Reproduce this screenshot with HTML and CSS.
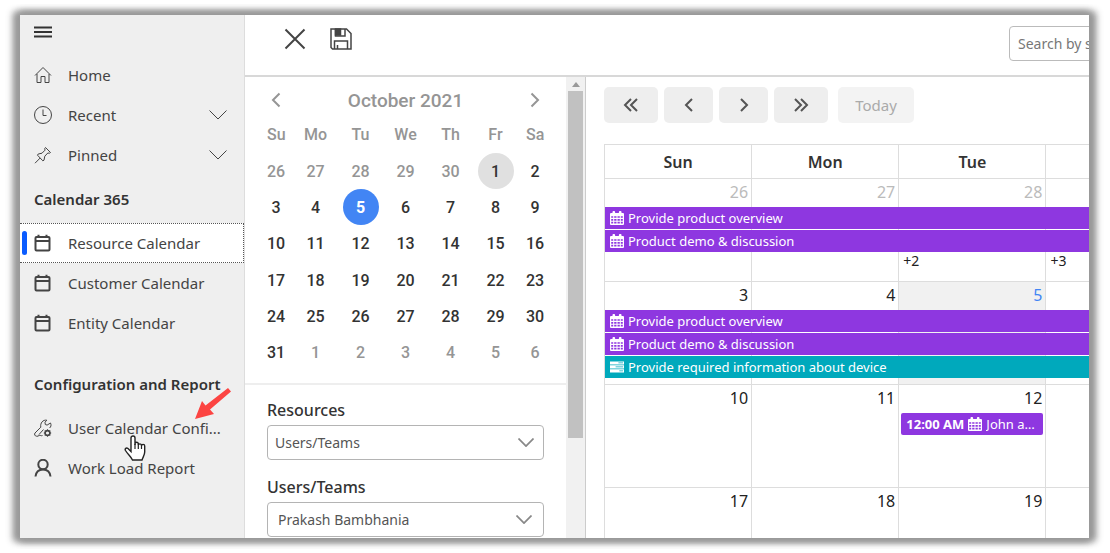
FILE: index.html
```html
<!DOCTYPE html>
<html lang="en">

<head>
	<meta charset="UTF-8">
	<meta name="viewport" content="width=device-width, initial-scale=1.0">
	<title>Resource Calendar</title>
	<link rel="stylesheet" href="styles.css">
</head>

<body>
	<svg class="defs" width="0" height="0" aria-hidden="true">
		<symbol id="i-calendar" viewBox="0 0 18 18">
			<rect x="1.5" y="3" width="14" height="13.5" rx="1" />
			<path d="M1.5 7h14M4.5 .8v2.4M12.5 .8v2.4" />
		</symbol>
		<symbol id="i-down" viewBox="0 0 18 10">
			<path d="M.5 .5 9 9 17.5 .5" />
		</symbol>
		<symbol id="i-event" viewBox="0 0 14 14">
			<path fill="currentColor" fill-rule="evenodd"
				d="M1 2h1.500V1a1 1 0 0 1 1-1h.6a1 1 0 0 1 1 1v1h3.800V1a1 1 0 0 1 1-1h.6a1 1 0 0 1 1 1v1H13a1 1 0 0 1 1 1v10a1 1 0 0 1-1 1H1a1 1 0 0 1-1-1V3a1 1 0 0 1 1-1zM1.200 5.200v1.600h2V5.200zM4.200 5.200v1.600h2.300V5.200zM7.500 5.200v1.600h2.300V5.200zM10.800 5.200v1.600h2V5.200zM1.200 7.900v1.800h2V7.900zM4.200 7.900v1.800h2.300V7.900zM7.500 7.900v1.800h2.300V7.900zM10.800 7.900v1.800h2V7.900zM1.200 10.800v1.800h2v-1.800zM4.200 10.800v1.800h2.300v-1.800zM7.500 10.800v1.800h2.300v-1.800zM10.800 10.800v1.800h2v-1.800z" />
		</symbol>
		<symbol id="i-task" viewBox="0 0 15 12">
			<path fill="currentColor" fill-rule="evenodd"
				d="M0 0h15v3.400H0zM9 1.300v.8h5v-.8zM0 4.200h15v3.400H0zM6 5.500v.8h8v-.8zM0 8.400h15v3.400H0zM10 9.700v.8h4v-.8z" />
		</symbol>
	</svg>

	<div class="app">
		<aside class="sidebar">
			<button class="hamburger" aria-label="Menu">
				<svg width="20" height="12" viewBox="0 0 20 12">
					<path d="M1 1.500h18M1 6h18M1 10.500h18" />
				</svg>
			</button>
			<nav>
				<a class="nav-item" href="#">
					<svg class="icon" viewBox="0 0 18 18">
						<path d="M1 9.500 9 1.500l8 8M3 8v8.500h4V10.500h4v6h4V8" />
					</svg>
					Home
				</a>
				<a class="nav-item" href="#">
					<svg class="icon" viewBox="0 0 18 18">
						<circle cx="9" cy="9" r="8.500" />
						<path d="M9 3.500V9.500h3.500" />
					</svg>
					Recent
					<svg class="chevron"><use href="#i-down" /></svg>
				</a>
				<a class="nav-item" href="#">
					<svg class="icon" viewBox="0 0 18 18">
						<path d="M11.500 1.500 16.500 6.500 15.500 7.200 13.800 7 10.800 10.200 10 14.200 8.800 14.800 3.500 9.200 4.200 8 8 7.200 11 4.200 10.800 2.300zM6.200 12 1 17.200" />
					</svg>
					Pinned
					<svg class="chevron"><use href="#i-down" /></svg>
				</a>

				<h2 class="nav-title">Calendar 365</h2>
				<a class="nav-item active" href="#">
					<svg class="icon dark"><use href="#i-calendar" /></svg>
					Resource Calendar
				</a>
				<a class="nav-item" href="#">
					<svg class="icon dark"><use href="#i-calendar" /></svg>
					Customer Calendar
				</a>
				<a class="nav-item" href="#">
					<svg class="icon dark"><use href="#i-calendar" /></svg>
					Entity Calendar
				</a>

				<h2 class="nav-title second">Configuration and Report</h2>
				<a class="nav-item" href="#">
					<svg class="icon" viewBox="0 0 18 18">
						<path d="M8.500 16.500C7 17.500 5.500 15 4 17.200H2.500a2 2 0 0 1-1.500-3.200L6.800 8.200C6 4 9 .5 12.800 1.200L11 3.200l.3 2.300 1.800.6L16.500 4C17.500 6 17 8 15.500 9M5 15.500 9.500 10.500" />
						<circle cx="13.500" cy="14" r="2.400" stroke-width="1.600" />
						<path d="M13.500 10.300v1.500M13.500 16.200v1.500M9.800 14h1.500M15.700 14h1.500M11 11.500l1 1M15 15.500l1 1M11 16.500l1-1M15 12.500l1-1" />
					</svg>
					User Calendar Confi...
					<svg class="arrow" width="38" height="34" viewBox="0 0 38 34">
						<path fill="#fc4442" d="M34 1 37 4.500 16 22.500 20 27 1 32 8 14 11.500 18.500z" />
					</svg>
					<svg class="pointer" width="22" height="26" viewBox="0 0 22 26">
						<path fill="#fff" stroke="#222" stroke-width="1.400" d="M7 16.500V3a2 2 0 0 1 4 0v7V8.500a1.700 1.700 0 0 1 3.300 0V10a1.700 1.700 0 0 1 3.200 0v1a1.600 1.600 0 0 1 3.200 0v6c0 3-1.700 5-2.700 8H8.500C7 21.500 4 19.500 1.500 15.500c-1-1.800.8-3.200 2.500-2z" />
						<path fill="none" stroke="#222" stroke-width="1.200" d="M11 9v5M14.300 9.500V14M17.500 10.500V14" />
					</svg>
				</a>
				<a class="nav-item" href="#">
					<svg class="icon dark" viewBox="0 0 18 18">
						<circle cx="9" cy="5.500" r="4.700" />
						<path d="M1.500 17.500C2 13 5 10.500 9 10.500s7 2.500 7.500 7" />
					</svg>
					Work Load Report
				</a>
			</nav>
		</aside>

		<div class="main-content">
			<header class="top-header">
				<button class="tool" aria-label="Close">
					<svg width="22" height="22" viewBox="0 0 22 22">
						<path d="M1.500 1.500l19 19M20.500 1.500l-19 19" />
					</svg>
				</button>
				<button class="tool save" aria-label="Save">
					<svg width="22" height="22" viewBox="0 0 22 22">
						<path d="M1 1h15.500L21 5.500V21H2.500L1 19.500z" />
						<path d="M4.500 21V13h13v8M5.500 1v7h9.500V1" />
						<path class="solid" d="M5.500 1h5v6h-5z" />
						<path d="M7.500 21v-4" />
					</svg>
				</button>
				<input class="search" type="text" placeholder="Search by subject" aria-label="Search by subject">
			</header>

			<div class="content">
				<section class="filters">
					<div class="filters-body">
						<div class="mini">
							<div class="mini-header">
								<button aria-label="Previous month">
									<svg width="10" height="16" viewBox="0 0 10 16"><path d="M8.500 1.500 2 8l6.500 6.500" /></svg>
								</button>
								<span>October 2021</span>
								<button aria-label="Next month">
									<svg width="10" height="16" viewBox="0 0 10 16"><path d="M1.500 1.500 8 8l-6.500 6.500" /></svg>
								</button>
							</div>
							<table class="mini-table">
								<thead>
									<tr>
										<th>Su</th>
										<th>Mo</th>
										<th>Tu</th>
										<th>We</th>
										<th>Th</th>
										<th>Fr</th>
										<th>Sa</th>
									</tr>
								</thead>
								<tbody id="miniDays"></tbody>
							</table>
						</div>
						<form class="fields">
							<label for="resources">Resources</label>
							<div class="select">
								<select id="resources">
									<option>Users/Teams</option>
								</select>
								<svg><use href="#i-down" /></svg>
							</div>
							<label for="users">Users/Teams</label>
							<div class="select inset">
								<select id="users">
									<option>Prakash Bambhania</option>
								</select>
								<svg><use href="#i-down" /></svg>
							</div>
						</form>
					</div>
					<div class="scrollbar">
						<div class="scroll-up"></div>
						<div class="scroll-thumb"></div>
					</div>
				</section>

				<section class="schedule">
					<div class="schedule-nav">
						<button class="wide" aria-label="Previous year">
							<svg width="16" height="16" viewBox="0 0 16 16"><path d="M8 2 2 8l6 6M14 2 8 8l6 6" /></svg>
						</button>
						<button aria-label="Previous">
							<svg width="16" height="16" viewBox="0 0 16 16"><path d="M11 2 5 8l6 6" /></svg>
						</button>
						<button aria-label="Next">
							<svg width="16" height="16" viewBox="0 0 16 16"><path d="M5 2l6 6-6 6" /></svg>
						</button>
						<button class="wide" aria-label="Next year">
							<svg width="16" height="16" viewBox="0 0 16 16"><path d="M2 2l6 6-6 6M8 2l6 6-6 6" /></svg>
						</button>
						<button class="today" disabled>Today</button>
					</div>
					<table class="month">
						<thead>
							<tr>
								<th>Sun</th>
								<th>Mon</th>
								<th>Tue</th>
								<th>Wed</th>
								<th>Thu</th>
								<th>Fri</th>
								<th>Sat</th>
							</tr>
						</thead>
						<tbody id="monthRows"></tbody>
					</table>
				</section>
			</div>
		</div>
	</div>

	<script>
		const purple = { icon: 'i-event', type: 'meeting' };
		const overview = { ...purple, title: 'Provide product overview', span: true };
		const demo = { ...purple, title: 'Product demo &amp; discussion', span: true };

		const events = {
			'0-0': [overview, demo],
			'1-0': [overview, demo, { icon: 'i-task', type: 'task', title: 'Provide required information about device', span: true }],
			'2-2': [{ ...purple, time: '12:00 AM', title: 'John and team' }]
		};
		const more = { '0-2': '+2', '0-3': '+3' };

		// first cell is Sunday 26 September
		function dayAt(index) {
			return new Date(2021, 8, 26 + index);
		}

		function renderMini() {
			let html = '';
			for (let week = 0; week < 6; week++) {
				html += '<tr>';
				for (let d = 0; d < 7; d++) {
					const date = dayAt(week * 7 + d);
					let cls = date.getMonth() === 9 ? '' : 'other';
					if (date.getMonth() === 9 && date.getDate() === 1) cls = 'first';
					if (date.getMonth() === 9 && date.getDate() === 5) cls = 'selected';
					html += `<td><button class="${cls}">${date.getDate()}</button></td>`;
				}
				html += '</tr>';
			}
			document.getElementById('miniDays').innerHTML = html;
		}

		function eventHtml(e) {
			const time = e.time ? `<strong>${e.time}</strong>` : '';
			return `<a href="#" class="event ${e.type} ${e.span ? 'span' : ''}">${time}<svg><use href="#${e.icon}" /></svg><span>${e.title}</span></a>`;
		}

		function renderMonth() {
			let html = '';
			for (let week = 0; week < 5; week++) {
				html += '<tr>';
				for (let d = 0; d < 7; d++) {
					const date = dayAt(week * 7 + d);
					const key = `${week}-${d}`;
					let cls = date.getMonth() === 9 ? '' : 'other';
					if (key === '1-2') cls = 'current';
					html += `<td class="${cls}"><div class="num">${date.getDate()}</div>`;
					html += (events[key] || []).map(eventHtml).join('');
					if (more[key]) html += `<a href="#" class="more">${more[key]}</a>`;
					html += '</td>';
				}
				html += '</tr>';
			}
			document.getElementById('monthRows').innerHTML = html;
		}

		renderMini();
		renderMonth();
	</script>
</body>

</html>
```

FILE: styles.css
```css
* {
	box-sizing: border-box;
}

body {
	margin: 0;
	padding: 15px 21px 15px 20px;
	height: 100vh;
	font-family: "Noto Sans", "Open Sans", sans-serif;
	font-size: 14px;
	color: #333;
	background: #fff;
	overflow: hidden;
}

button {
	border: none;
	padding: 0;
	background: none;
	font: inherit;
	color: inherit;
	cursor: pointer;
}

a {
	color: inherit;
	text-decoration: none;
}

svg {
	fill: none;
	stroke: currentColor;
	flex-shrink: 0;
}

.defs {
	position: absolute;
}

.app {
	display: flex;
	height: 100%;
	background: #fff;
	box-shadow: 0 0 7px 3px #999, -4px 0 7px 3px #999, 4px 0 7px 3px #999;
}

/* sidebar */

.sidebar {
	width: 225px;
	flex-shrink: 0;
	background: #efefef;
	border-right: 1px solid #ddd;
}

.hamburger {
	display: flex;
	align-items: center;
	height: 34px;
	margin: 0 0 6px 13px;
}

.hamburger svg {
	stroke: #333;
	stroke-width: 2;
}

.nav-item {
	display: flex;
	align-items: center;
	position: relative;
	height: 40px;
	padding: 0 16px 0 14px;
	border: 1px solid transparent;
	border-left: none;
	font-size: 15px;
	color: #444;
	white-space: nowrap;
}

.nav-item .icon {
	width: 18px;
	height: 18px;
	margin-right: 16px;
	stroke: #444;
}

.nav-item .icon.dark {
	stroke: #444;
	stroke-width: 2;
}

.nav-item .chevron {
	width: 18px;
	height: 10px;
	margin-left: auto;
	stroke: #444;
}

.nav-item.active {
	background: #fff;
	border: 1px dotted #555;
	border-left: none;
}

.nav-item.active::before {
	content: "";
	position: absolute;
	left: 2px;
	top: 7px;
	width: 5px;
	height: 24px;
	border-radius: 3px;
	background: #0b5cff;
}

.nav-title {
	margin: 0;
	padding-left: 14px;
	font-size: 15px;
	font-weight: 600;
	line-height: 48px;
	color: #333;
	white-space: nowrap;
}

.nav-title.second {
	margin-top: 17px;
}

.arrow {
	position: absolute;
	left: 174px;
	top: -22px;
	stroke: none;
}

.pointer {
	position: absolute;
	left: 104px;
	top: 26px;
	z-index: 2;
}

/* header */

.main-content {
	flex: 1;
	min-width: 0;
	display: flex;
	flex-direction: column;
	overflow: hidden;
}

.top-header {
	display: flex;
	align-items: flex-start;
	gap: 24px;
	flex-shrink: 0;
	height: 62px;
	padding: 11px 0 0 39px;
	border-bottom: 2px solid #d8d8d8;
}

.tool {
	height: 26px;
	color: #444;
}

.tool svg {
	display: block;
	stroke-width: 2;
}

.tool.save svg {
	stroke-width: 1.5;
}

.tool .solid {
	fill: #444;
}

.search {
	width: 200px;
	height: 35px;
	flex-shrink: 0;
	margin-left: auto;
	margin-right: -120px;
	padding: 0 8px;
	border: 1px solid #bbb;
	border-radius: 4px;
	font: inherit;
}

.search::placeholder {
	color: #777;
}

.content {
	flex: 1;
	min-height: 0;
	display: flex;
}

/* filters */

.filters {
	display: flex;
	width: 341px;
	flex-shrink: 0;
	border-right: 1px solid #ccc;
}

.filters-body {
	flex: 1;
	overflow: hidden;
}

.mini {
	height: 308px;
	padding: 7px 22px 0;
	border-bottom: 2px solid #eee;
	font-family: Roboto, sans-serif;
	font-weight: 500;
}

.mini-header {
	display: flex;
	align-items: center;
	justify-content: space-between;
	height: 32px;
	padding: 0 4px;
	font-size: 19px;
	color: #959595;
}

.mini-header svg {
	display: block;
	stroke-width: 2;
}

.mini-table {
	width: 100%;
	height: 255px;
	table-layout: fixed;
	border-collapse: collapse;
	font-size: 16px;
}

.mini-table th,
.mini-table td {
	padding: 0;
	text-align: center;
	font-weight: 500;
}

.mini-table th {
	height: 37px;
	color: #959595;
}

.mini-table th:first-child,
.mini-table td:first-child {
	width: 26px;
	padding-right: 8px;
}

.mini-table th:last-child,
.mini-table td:last-child {
	width: 26px;
	padding-left: 8px;
}

.mini-table button {
	display: block;
	margin: 0 auto;
	height: 36px;
}

.mini-table .other {
	color: #959595;
}

.mini-table .first,
.mini-table .selected {
	width: 36px;
	border-radius: 50%;
	background: #e0e0e0;
}

.mini-table .selected {
	background: #4285f4;
	color: #fff;
	font-weight: 700;
}

.fields {
	padding: 13px 22px 0;
}

.fields label {
	display: block;
	font-size: 16px;
	font-weight: 500;
	line-height: 24px;
}

.select {
	position: relative;
	margin: 3px 0 15px;
}

.select select {
	display: block;
	appearance: none;
	width: 100%;
	height: 35px;
	padding: 0 7px;
	border: 1px solid #b4b4b4;
	border-radius: 4px;
	background: #fff;
	font: inherit;
	color: #555;
}

.select svg {
	position: absolute;
	right: 10px;
	top: 13px;
	width: 16px;
	height: 9px;
	stroke: #888;
	stroke-width: 2;
	pointer-events: none;
}

.select.inset select {
	padding-left: 10px;
}

.select.inset svg {
	right: 12px;
}

.scrollbar {
	width: 19px;
	padding: 0 2px;
	background: #f1f1f1;
}

.scroll-up {
	height: 14px;
	display: flex;
	align-items: center;
	justify-content: center;
}

.scroll-up::before {
	content: "";
	border: 4px solid transparent;
	border-top: none;
	border-bottom: 5px solid #999;
}

.scroll-thumb {
	height: 347px;
	background: #c1c1c1;
}

/* month view */

.schedule {
	flex: 1;
	min-width: 0;
	padding: 10px 0 0 18px;
	overflow: hidden;
}

.schedule-nav {
	display: flex;
	gap: 6px;
	margin-bottom: 21px;
}

.schedule-nav button {
	display: flex;
	align-items: center;
	justify-content: center;
	width: 49px;
	height: 36px;
	border-radius: 5px;
	background: #eee;
	font-size: 15px;
}

.schedule-nav svg {
	stroke: #555;
	stroke-width: 2;
}

.schedule-nav .wide {
	width: 54px;
}

.schedule-nav .today {
	width: 76px;
	margin-left: 4px;
	background: #f3f3f3;
	color: #aaa;
	cursor: default;
}

.month {
	width: 1031px;
	table-layout: fixed;
	border-collapse: collapse;
}

.month th,
.month td {
	border: 1px solid #ddd;
	padding: 0;
}

.month th {
	height: 34px;
	font-size: 16px;
	font-weight: 600;
}

.month td {
	height: 103px;
	position: relative;
	vertical-align: top;
}

.num {
	height: 28px;
	padding-right: 3px;
	font-size: 16px;
	line-height: 26px;
	text-align: right;
	color: #222;
}

.other .num {
	color: #bbb;
}

.month .current {
	background: #f1f1f1;
}

.current .num {
	color: #4285f4;
}

.event {
	display: flex;
	align-items: center;
	gap: 4px;
	position: relative;
	z-index: 1;
	height: 22px;
	margin: 0 2px 1px;
	padding: 0 5px;
	border-radius: 2px;
	font-size: 13px;
	white-space: nowrap;
	color: #fff;
}

/* runs on over the whole week */
.event.span {
	width: 700%;
	margin: 0 0 1px;
	border-radius: 0;
}

.event svg {
	width: 14px;
	height: 14px;
	stroke: none;
}

.event span {
	overflow: hidden;
	text-overflow: ellipsis;
}

.meeting {
	background: #8e37e0;
}

.task {
	background: #00a9bc;
}

.more {
	display: block;
	padding: 46px 0 0 4px;
	line-height: 16px;
	color: #222;
}
```
